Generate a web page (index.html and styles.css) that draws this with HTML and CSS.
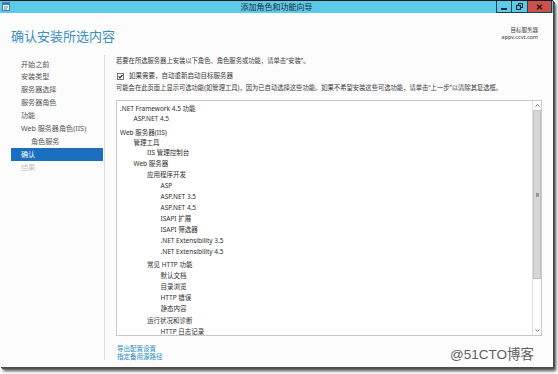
FILE: index.html
```html
<!DOCTYPE html>
<html lang="zh-CN">
<head>
<meta charset="utf-8">
<title>添加角色和功能向导</title>
<link rel="stylesheet" href="styles.css">
</head>
<body>
<div class="window">
  <div class="titlebar">
    <div class="tb-left">
      <svg class="app-icon" width="8" height="9" viewBox="0 0 8 9">
        <rect x="0.5" y="0.5" width="7" height="8" fill="#e8f2f8" stroke="#4a7fa3"/>
        <rect x="1" y="1" width="6" height="2" fill="#3b7fc0"/>
        <rect x="2" y="4.5" width="4" height="1" fill="#6b8ea8"/>
        <rect x="2" y="6.5" width="3" height="1" fill="#6b8ea8"/>
      </svg>
    </div>
    <div class="title">添加角色和功能向导</div>
    <div class="controls">
      <div class="btn btn-min"><span class="min-bar"></span></div>
      <div class="btn btn-max">
        <svg width="7" height="7" viewBox="0 0 7 7"><rect x="2.5" y="0.5" width="4" height="4" fill="none" stroke="#1b2a33"/><rect x="0.5" y="2.5" width="4" height="4" fill="#5ccbea" stroke="#1b2a33" stroke-width="1.2"/></svg>
      </div>
      <div class="btn btn-close">
        <svg width="7" height="6" viewBox="0 0 7 6"><path d="M1 0.8 L6 5.2 M6 0.8 L1 5.2" stroke="#2a1414" stroke-width="1.5"/></svg>
      </div>
    </div>
  </div>

  <div class="header">
    <h1 class="heading">确认安装所选内容</h1>
    <div class="target">
      <div class="target-label">目标服务器</div>
      <div class="target-name">appv.ccvt.com</div>
    </div>
  </div>

  <div class="main">
    <nav class="nav">
      <div class="nav-item">开始之前</div>
      <div class="nav-item">安装类型</div>
      <div class="nav-item">服务器选择</div>
      <div class="nav-item">服务器角色</div>
      <div class="nav-item">功能</div>
      <div class="nav-item">Web 服务器角色(IIS)</div>
      <div class="nav-item nav-sub">角色服务</div>
      <div class="nav-item nav-active">确认</div>
      <div class="nav-item nav-disabled">结果</div>
    </nav>

    <div class="content">
      <div class="line intro">若要在所选服务器上安装以下角色、角色服务或功能，请单击“安装”。</div>
      <div class="line check-row">
        <svg class="checkbox" width="7" height="7" viewBox="0 0 7 7">
          <rect x="0.5" y="0.5" width="6" height="6" fill="#fff" stroke="#777"/>
          <path d="M1.6 3.4 L3 4.9 L5.5 1.8" fill="none" stroke="#222" stroke-width="1.1"/>
        </svg>
        <span>如果需要，自动重新启动目标服务器</span>
      </div>
      <div class="line note">可能会在此页面上显示可选功能(如管理工具)，因为已自动选择这些功能。如果不希望安装这些可选功能，请单击“上一步”以清除其复选框。</div>

      <div class="listbox">
        <div class="list">
          <div class="row lv0 first">.NET Framework 4.5 功能</div>
          <div class="row lv1 tight">ASP.NET 4.5</div>
          <div class="row lv0 group">Web 服务器(IIS)</div>
          <div class="row lv1 tight">管理工具</div>
          <div class="row lv2">IIS 管理控制台</div>
          <div class="row lv1">Web 服务器</div>
          <div class="row lv2">应用程序开发</div>
          <div class="row lv3">ASP</div>
          <div class="row lv3">ASP.NET 3.5</div>
          <div class="row lv3">ASP.NET 4.5</div>
          <div class="row lv3">ISAPI 扩展</div>
          <div class="row lv3">ISAPI 筛选器</div>
          <div class="row lv3">.NET Extensibility 3.5</div>
          <div class="row lv3">.NET Extensibility 4.5</div>
          <div class="row lv2 sect">常见 HTTP 功能</div>
          <div class="row lv3">默认文档</div>
          <div class="row lv3">目录浏览</div>
          <div class="row lv3">HTTP 错误</div>
          <div class="row lv3">静态内容</div>
          <div class="row lv2 sect">运行状况和诊断</div>
          <div class="row lv3">HTTP 日志记录</div>
        </div>
        <div class="scrollbar">
          <div class="sb-btn">
            <svg width="5" height="3" viewBox="0 0 5 3"><path d="M0.5 2.5 L2.5 0.6 L4.5 2.5" fill="none" stroke="#666" stroke-width="0.9"/></svg>
          </div>
          <div class="sb-thumb"><span class="grip"></span></div>
          <div class="sb-track"></div>
          <div class="sb-btn">
            <svg width="5" height="3" viewBox="0 0 5 3"><path d="M0.5 0.5 L2.5 2.4 L4.5 0.5" fill="none" stroke="#666" stroke-width="0.9"/></svg>
          </div>
        </div>
      </div>

      <div class="links">
        <a class="link">导出配置设置</a>
        <a class="link">指定备用源路径</a>
      </div>
    </div>
  </div>

  <div class="watermark">@51CTO博客</div>
</div>
</body>
</html>
```

FILE: styles.css
```css
* { box-sizing: border-box; }

html, body {
  margin: 0;
  padding: 0;
  background: #ffffff;
  width: 558px;
  height: 374px;
  overflow: hidden;
}

body {
  font-family: "Noto Sans", "Noto Sans CJK SC", sans-serif;
  color: #333;
}

.window {
  position: relative;
  width: 553px;
  height: 367px;
  background: #fcfcfc;
  display: flex;
  flex-direction: column;
  box-shadow: 1px 1px 0 #4a4a4a, 2px 2px 0 #555, 3px 4px 3px rgba(0, 0, 0, 0.7);
}

/* title bar */
.titlebar {
  height: 13px;
  flex: none;
  background: #5ccbea;
  border-top: 1px solid #1a1a1a;
  display: grid;
  grid-template-columns: 1fr auto 1fr;
  align-items: start;
}

.tb-left {
  display: flex;
  padding: 1px 0 0 2px;
}

.app-icon { display: block; }

.title {
  font-size: 8px;
  line-height: 12px;
  color: #1e2a30;
}

.controls {
  justify-self: end;
  display: flex;
  margin-right: 1px;
}

.btn {
  height: 12px;
  border: 1px solid #23424f;
  border-top: none;
  display: flex;
  align-items: center;
  justify-content: center;
}

.btn-min { width: 16px; background: #5ccbea; }
.btn-max { width: 16px; background: #5ccbea; border-left: none; }
.btn-close { width: 24px; background: #c9524d; border-left: none; }

.min-bar {
  display: block;
  width: 6px;
  height: 2px;
  background: #1b2a33;
  margin-top: 4px;
}

/* header */
.header {
  height: 42px;
  flex: none;
  display: flex;
  justify-content: space-between;
  align-items: flex-start;
  padding: 0 15px 0 11px;
}

.heading {
  margin: 15px 0 0 0;
  font-size: 13px;
  line-height: 16px;
  font-weight: normal;
  color: #3b8fc3;
}

.target {
  margin-top: 14px;
  text-align: right;
  font-size: 5.5px;
  line-height: 7px;
  color: #333;
}

/* main */
.main {
  height: 305px;
  flex: none;
  display: flex;
}

.nav {
  width: 105px;
  flex: none;
  border-right: 1px solid #e0e0e0;
  padding-top: 2.5px;
}

.nav-item {
  margin-left: 11px;
  width: 92px;
  height: 12.9px;
  line-height: 12.9px;
  padding-left: 10px;
  font-size: 7.1px;
  color: #555;
  white-space: nowrap;
}

.nav-sub { padding-left: 20px; }

.nav-active {
  background: #1a6fbe;
  color: #fff;
}

.nav-disabled { color: #c4c4c4; }

/* content */
.content {
  flex: 1;
  padding: 0 11px 0 11px;
  min-width: 0;
}

.line {
  font-size: 6.3px;
  line-height: 12px;
  height: 12px;
  color: #3a3a3a;
  white-space: nowrap;
}

.check-row {
  margin-top: 3px;
  display: flex;
  align-items: center;
  gap: 5px;
  padding-left: 1px;
  font-size: 6.5px;
}

.checkbox { display: block; flex: none; }

.listbox {
  margin-top: 6px;
  height: 236px;
  border: 1px solid #c9c9c9;
  background: #fff;
  display: flex;
  overflow: hidden;
}

.list {
  flex: 1;
  padding: 0.5px 0 0 3px;
}

.row {
  height: 11px;
  line-height: 11px;
  font-size: 6.5px;
  color: #2e2e2e;
  white-space: nowrap;
}

.first { margin-top: 1px; }
.tight { height: 9.5px; line-height: 9.5px; }
.group { margin-top: 3.5px; }
.sect { margin-top: 1.5px; }

.lv0 { padding-left: 0; }
.lv1 { padding-left: 13.5px; }
.lv2 { padding-left: 27px; }
.lv3 { padding-left: 40.5px; }

.scrollbar {
  width: 9px;
  flex: none;
  border-left: 1px solid #dedede;
  display: flex;
  flex-direction: column;
  background: #fff;
}

.sb-btn {
  height: 9px;
  display: flex;
  align-items: center;
  justify-content: center;
  flex: none;
}

.sb-thumb {
  height: 169px;
  flex: none;
  background: #d6d6d6;
  border: 1px solid #c2c2c2;
  display: flex;
  align-items: center;
  justify-content: center;
}

.grip {
  display: block;
  width: 3px;
  height: 4px;
  background: #9a9a9a;
}

.sb-track { flex: 1; }

.links {
  margin-top: 9px;
  display: flex;
  flex-direction: column;
  padding-left: 1px;
}

.link {
  font-size: 6.5px;
  line-height: 8px;
  color: #2b8cc0;
  white-space: nowrap;
}

/* watermark overlay */
.watermark {
  position: absolute;
  left: 450px;
  top: 346px;
  font-family: "Liberation Sans", "Noto Sans CJK SC", sans-serif;
  font-size: 13.5px;
  line-height: 18px;
  color: #5f5f5f;
  text-shadow: 0 0 1px #fff;
  white-space: nowrap;
}
```
